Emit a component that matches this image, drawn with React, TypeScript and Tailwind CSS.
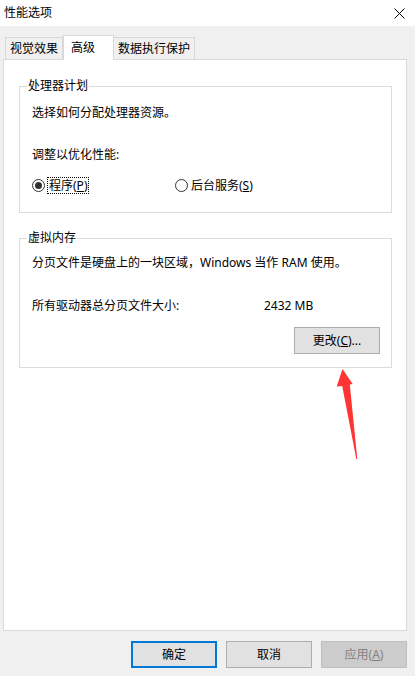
const font = "[font-family:'Noto_Sans','Noto_Sans_CJK_SC',sans-serif]";

function Radio({ checked }: { checked?: boolean }) {
  return (
    <span className="flex h-[13px] w-[13px] shrink-0 items-center justify-center rounded-full border border-[#333333] bg-white">
      {checked && <span className="h-[7px] w-[7px] rounded-full bg-[#333333]" />}
    </span>
  );
}

function Button({
  children,
  variant = "normal",
}: {
  children: React.ReactNode;
  variant?: "normal" | "default" | "disabled";
}) {
  const styles = {
    normal: "border border-[#adadad] bg-[#e1e1e1] text-black",
    default: "border-2 border-[#0078d7] bg-[#e1e1e1] text-black",
    disabled: "border border-[#bfbfbf] bg-[#cccccc] text-[#838383]",
  };
  return (
    <div
      className={`flex h-[27px] w-[86px] items-center justify-center text-[12px] leading-none ${styles[variant]}`}
    >
      {children}
    </div>
  );
}

export default function App() {
  return (
    <div
      className={`relative flex h-[676px] w-[415px] flex-col bg-[#f0f0f0] text-[12px] text-black ${font}`}
    >
      {/* title bar */}
      <div className="flex h-[26px] items-center justify-between bg-white pl-[4px] pr-[10px]">
        <span className="leading-none">性能选项</span>
        <svg width="11" height="11" viewBox="0 0 11 11">
          <path d="M0.5 0.5 L10.5 10.5 M10.5 0.5 L0.5 10.5" stroke="#000" strokeWidth="1" />
        </svg>
      </div>

      {/* tabs */}
      <div className="flex items-end px-[5px] pt-[9px]">
        <div className="flex h-[22px] w-[58px] items-center justify-center border border-b-0 border-[#d9d9d9] bg-[#f0f0f0] pt-[1px]">
          视觉效果
        </div>
        <div className="relative z-10 -mb-px flex h-[25px] w-[51px] items-start border border-b-0 border-[#d9d9d9] bg-white pl-[7px] pt-[3px]">
          高级
        </div>
        <div className="flex h-[22px] w-[81px] items-center justify-center border border-b-0 border-l-0 border-[#d9d9d9] bg-[#f0f0f0] pt-[1px]">
          数据执行保护
        </div>
      </div>

      {/* panel */}
      <div className="mx-[3px] flex h-[572px] w-[404px] flex-col border border-[#d9d9d9] bg-white pl-[15px] pr-[14px] pt-[18px]">
        <fieldset className="w-[373px] border border-[#dcdcdc] pb-[18px]">
          <legend className="ml-[7px] px-[1px] leading-[16px]">处理器计划</legend>
          <div className="px-[12px]">
            <p className="mt-[11px] leading-[16px]">选择如何分配处理器资源。</p>
            <p className="mt-[26px] leading-[16px]">调整以优化性能:</p>
            <div className="mt-[14px] flex h-[17px] items-center">
              <div className="flex w-[143px] items-center gap-[2px]">
                <Radio checked />
                <span className="border border-dotted border-black px-[1px] leading-[15px]">
                  程序(<span className="underline">P</span>)
                </span>
              </div>
              <div className="flex items-center gap-[3px]">
                <Radio />
                <span className="leading-[15px]">
                  后台服务(<span className="underline">S</span>)
                </span>
              </div>
            </div>
          </div>
        </fieldset>

        <fieldset className="mt-[17px] w-[373px] border border-[#dcdcdc] pb-[13px]">
          <legend className="ml-[7px] px-[1px] leading-[16px]">虚拟内存</legend>
          <div className="px-[12px]">
            <p className="mt-[9px] leading-[16px]">
              分页文件是硬盘上的一块区域，Windows 当作 RAM 使用。
            </p>
            <div className="mt-[27px] flex leading-[16px]">
              <span className="w-[232px]">所有驱动器总分页文件大小:</span>
              <span>2432 MB</span>
            </div>
          </div>
          <div className="mt-[13px] flex justify-end pr-[11px]">
            <Button>
              更改(<span className="underline">C</span>)...
            </Button>
          </div>
        </fieldset>
      </div>

      {/* dialog buttons */}
      <div className="flex justify-end gap-[9px] pr-[8px] pt-[10px]">
        <Button variant="default">确定</Button>
        <Button>取消</Button>
        <Button variant="disabled">
          应用(<span className="underline">A</span>)
        </Button>
      </div>

      {/* annotation arrow */}
      <svg
        className="pointer-events-none absolute left-0 top-0"
        width="415"
        height="676"
        viewBox="0 0 415 676"
      >
        <polygon
          points="342.5,369 352.7,384 349.8,384.6 357.3,459 356.3,459 342.2,386 336.7,386.6"
          fill="#ff3434"
        />
      </svg>
    </div>
  );
}
